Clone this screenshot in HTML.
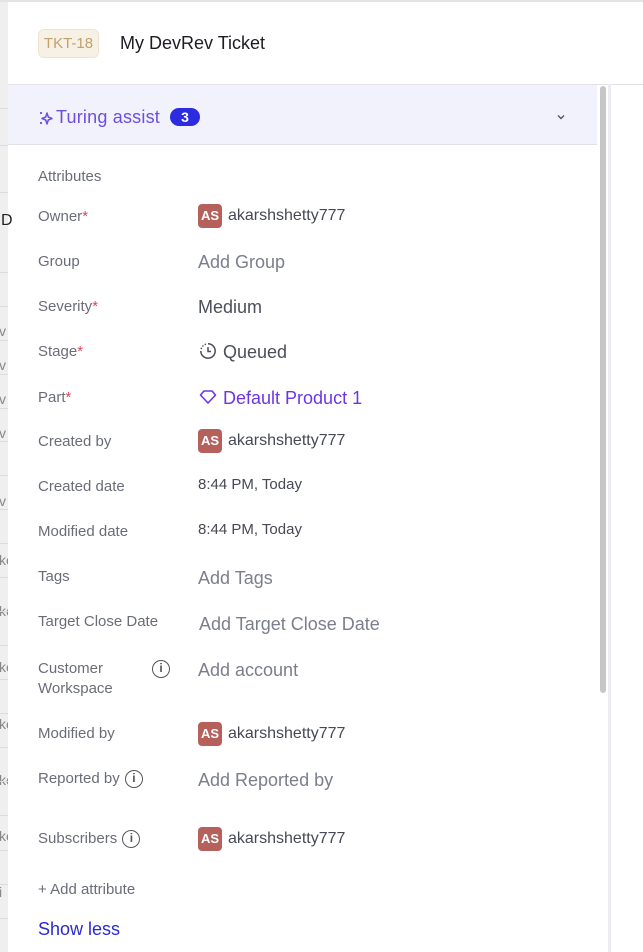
<!DOCTYPE html>
<html><head><meta charset="utf-8"><style>
*{margin:0;padding:0;box-sizing:border-box}
body{width:643px;height:952px;overflow:hidden;background:#fff;font-family:"Liberation Sans",Arial,sans-serif;position:relative}
.abs{position:absolute;white-space:nowrap}
.left{position:absolute;left:0;top:0;width:8px;height:952px;background:#efeff0;overflow:hidden}
.hl{position:absolute;left:0;width:8px;height:1px;background:#dcdcdf}
.lt{position:absolute;left:-1px;font-size:14px;color:#888}
.lbl{position:absolute;left:38px;font-size:15px;color:#6a6d78;line-height:18px}
.req{color:#e2445c}
.val{position:absolute;left:198px;font-size:18px;color:#7b7e8d;line-height:22px}
.user{position:absolute;left:198px;height:24px;display:flex;align-items:center;font-size:16px;line-height:24px;color:#464955}
.av{width:24px;height:24px;border-radius:4px;background:#b6605b;color:#fff;font-size:13px;font-weight:bold;display:flex;align-items:center;justify-content:center;margin-right:6px}
.date{position:absolute;left:198px;font-size:15px;color:#464955;line-height:18px}
.info{display:inline-block;width:18px;height:18px;border:1.5px solid #555;border-radius:50%;font-size:12px;line-height:15px;text-align:center;color:#555;font-weight:bold;vertical-align:middle}
</style></head><body>
<div class="left">
<div class="lt" style="top:323px">v</div><div class="lt" style="top:357px">v</div><div class="lt" style="top:391px">v</div><div class="lt" style="top:425px">v</div><div class="lt" style="top:493px">v</div>
<div class="lt" style="top:552px">ke</div><div class="lt" style="top:603px">ke</div><div class="lt" style="top:659px">ke</div><div class="lt" style="top:716px">ke</div><div class="lt" style="top:772px">ke</div><div class="lt" style="top:828px">ke</div><div class="lt" style="top:884px">i</div>
</div>
<div class="abs" style="left:0;top:0;width:643px;height:2px;background:#e4e4e6"></div>
<div class="hl" style="top:108px"></div><div class="hl" style="top:145px"></div><div class="hl" style="top:192px"></div><div class="hl" style="top:272px"></div><div class="hl" style="top:306px"></div><div class="hl" style="top:340px"></div><div class="hl" style="top:374px"></div><div class="hl" style="top:408px"></div><div class="hl" style="top:441px"></div><div class="hl" style="top:475px"></div><div class="hl" style="top:509px"></div><div class="hl" style="top:543px"></div><div class="hl" style="top:577px"></div><div class="hl" style="top:611px"></div><div class="hl" style="top:645px"></div><div class="hl" style="top:679px"></div><div class="hl" style="top:713px"></div><div class="hl" style="top:747px"></div><div class="hl" style="top:781px"></div><div class="hl" style="top:815px"></div><div class="hl" style="top:850px"></div><div class="hl" style="top:884px"></div><div class="hl" style="top:918px"></div>
<div class="abs" style="left:1px;top:212px;font-size:16px;color:#222">D</div>
<div class="abs" style="left:8px;top:84px;width:635px;height:1px;background:#e2e2e6"></div>
<div class="abs" style="left:38px;top:29px;width:61px;height:29px;background:#f7f0e4;border:1px solid #eee3cf;border-radius:6px;color:#c4a06a;font-size:15px;line-height:27px;text-align:center">TKT-18</div>
<div class="abs" style="left:120px;top:33px;font-size:18px;color:#1c1c22">My DevRev Ticket</div>
<div class="abs" style="left:8px;top:85px;width:589px;height:60px;background:#f1f2fc;border-bottom:1px solid #dfe0ea"></div>
<svg class="abs" style="left:38px;top:110px" width="16" height="16" viewBox="0 0 16 16"><path d="M9 3 L10.3 7 L14 8.5 L10.3 10 L9 14 L7.7 10 L4 8.5 L7.7 7 Z" fill="none" stroke="#6e4de0" stroke-width="1.5" stroke-linejoin="round"/><circle cx="3" cy="3" r="1.1" fill="#6e4de0"/><circle cx="3" cy="13" r="1.1" fill="#6e4de0"/></svg>
<div class="abs" style="left:56px;top:107px;font-size:18px;color:#6e4de0;letter-spacing:0.2px">Turing assist</div>
<div class="abs" style="left:170px;top:108px;width:30px;height:18px;border-radius:9px;background:#2d2be0;color:#fff;font-size:14px;font-weight:bold;text-align:center;line-height:18px">3</div>
<svg class="abs" style="left:556px;top:113px" width="10" height="8" viewBox="0 0 10 8"><path d="M2 2.5 L5 5.5 L8 2.5" fill="none" stroke="#555" stroke-width="1.4"/></svg>
<div class="abs" style="left:600px;top:86px;width:6px;height:607px;background:#c6c6c6;border-radius:3px"></div>
<div class="abs" style="left:608px;top:84px;width:3px;height:868px;background:#ececf0"></div>
<div class="lbl" style="top:168px">Attributes</div>
<div class="lbl" style="top:208px">Owner<span class="req">*</span></div>
<div class="user" style="top:204px"><div class="av">AS</div>akarshshetty777</div>
<div class="lbl" style="top:253px">Group</div>
<div class="val" style="top:251px">Add Group</div>
<div class="lbl" style="top:298px">Severity<span class="req">*</span></div>
<div class="val" style="top:296px;color:#4b4e5b">Medium</div>
<div class="lbl" style="top:343px">Stage<span class="req">*</span></div>
<svg class="abs" style="left:199px;top:342px" width="18" height="18" viewBox="0 0 18 18"><path d="M9 1.8 A7.2 7.2 0 1 1 1.8 9" fill="none" stroke="#4b4e5b" stroke-width="1.5"/><path d="M2.3 6.3 L2.3 6.4 M3.9 3.9 L3.9 4 M6.3 2.3 L6.3 2.4" stroke="#4b4e5b" stroke-width="1.6" stroke-linecap="round"/><path d="M9 5 V9.5 H12" fill="none" stroke="#4b4e5b" stroke-width="1.5"/></svg>
<div class="val" style="top:341px;left:223px;color:#4b4e5b">Queued</div>
<div class="lbl" style="top:389px">Part<span class="req">*</span></div>
<svg class="abs" style="left:199px;top:389px" width="18" height="16" viewBox="0 0 18 16"><path d="M5 2 H13 L16.5 6 L9 14 L1.5 6 Z" fill="none" stroke="#6e35e8" stroke-width="1.6" stroke-linejoin="round"/></svg>
<div class="val" style="top:387px;left:223px;color:#6e35e8">Default Product 1</div>
<div class="lbl" style="top:433px">Created by</div>
<div class="user" style="top:429px"><div class="av">AS</div>akarshshetty777</div>
<div class="lbl" style="top:478px">Created date</div>
<div class="date" style="top:476px">8:44 PM, Today</div>
<div class="lbl" style="top:523px">Modified date</div>
<div class="date" style="top:521px">8:44 PM, Today</div>
<div class="lbl" style="top:568px">Tags</div>
<div class="val" style="top:567px">Add Tags</div>
<div class="lbl" style="top:613px">Target Close Date</div>
<div class="val" style="top:613px;left:199px">Add Target Close Date</div>
<div class="lbl" style="top:659px;line-height:20px">Customer<br>Workspace</div>
<div class="abs" style="left:152px;top:660px"><span class="info">i</span></div>
<div class="val" style="top:659px">Add account</div>
<div class="lbl" style="top:725px">Modified by</div>
<div class="user" style="top:722px"><div class="av">AS</div>akarshshetty777</div>
<div class="lbl" style="top:770px">Reported by <span class="info" style="margin-left:1px">i</span></div>
<div class="val" style="top:769px">Add Reported by</div>
<div class="lbl" style="top:830px">Subscribers <span class="info" style="margin-left:1px">i</span></div>
<div class="user" style="top:827px"><div class="av">AS</div>akarshshetty777</div>
<div class="lbl" style="top:881px">+ Add attribute</div>
<div class="abs" style="left:38px;top:919px;font-size:18px;color:#2a2ad0">Show less</div>
</body></html>
